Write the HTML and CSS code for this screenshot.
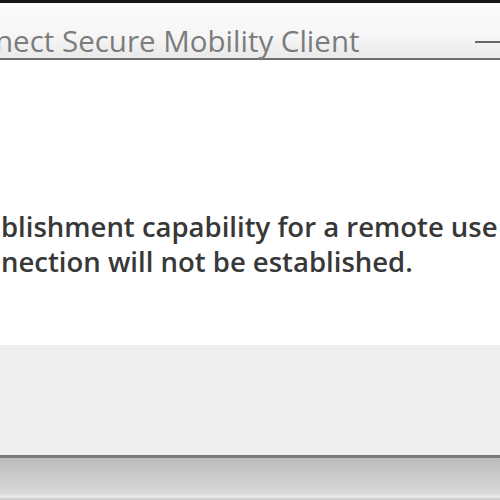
FILE: index.html
```html
<!DOCTYPE html>
<html>
<head>
<meta charset="utf-8">
<link rel="stylesheet" href="styles.css">
</head>
<body>
<div class="window">
  <div class="titlebar">
    <span class="title">nect Secure Mobility Client</span>
    <span class="minimize"></span>
  </div>
  <div class="content">
    <p class="message">blishment capability for a remote use<br>nection will not be established.</p>
  </div>
  <div class="footer"></div>
  <div class="frame-bottom"></div>
</div>
</body>
</html>
```
FILE: styles.css
```css
html, body {
  margin: 0;
  padding: 0;
  background: #ffffff;
  overflow: hidden;
}
.window {
  width: 500px;
  height: 500px;
  display: flex;
  flex-direction: column;
  font-family: "Open Sans", "Noto Sans", sans-serif;
}
.titlebar {
  height: 55px;
  border-top: 3px solid #161616;
  border-bottom: 2px solid #6e6e6e;
  background: linear-gradient(#fbfbfb, #f6f6f6 60%, #e9e9e9);
  display: flex;
  align-items: flex-end;
  justify-content: space-between;
  position: relative;
}
.title {
  font-size: 29.5px;
  color: #7c7c7c;
  margin-left: -5px;
  line-height: 1;
  padding-bottom: 3px;
  white-space: nowrap;
}
.minimize {
  width: 25px;
  height: 2px;
  background: #666;
  margin-bottom: 15px;
}
.content {
  height: 285px;
  background: #ffffff;
  display: flex;
  flex-direction: column;
  justify-content: flex-start;
}
.message {
  margin: 0;
  margin-top: 149px;
  margin-left: 1px;
  font-size: 27.5px;
  line-height: 35px;
  color: #383838;
  font-weight: 600;
  white-space: nowrap;
}
.footer {
  height: 110px;
  background: #efefef;
  border-bottom: 3px solid #7a7a7a;
}
.frame-bottom {
  flex: 1;
  background: linear-gradient(#bcbcbc, #d9d9d9 85%, #ececec 92%, #c4c4c4);
}
```
